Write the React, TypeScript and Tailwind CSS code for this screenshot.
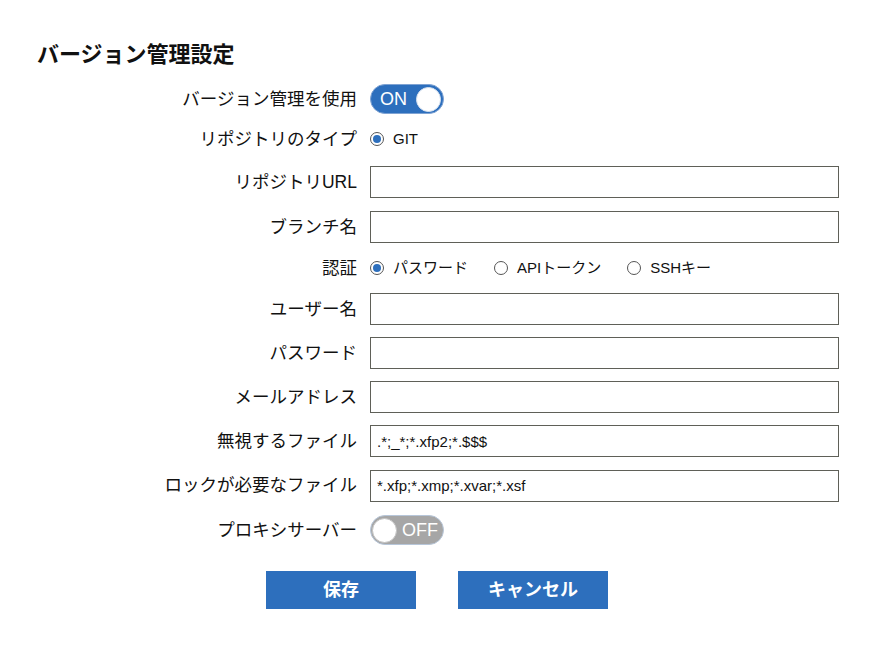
import { useState } from "react"

type ToggleProps = {
    on: boolean;
    onChange: (v: boolean) => void;
}

const Toggle = ({ on, onChange }: ToggleProps) => {
    return (
        <button
            type="button"
            onClick={() => onChange(!on)}
            className={
                on
                    ? "flex items-center justify-between w-[74px] h-[30px] rounded-full bg-[#2d6fbd] border border-[#7fa3d3] pl-[9px] pr-[2px]"
                    : "flex items-center justify-between w-[74px] h-[30px] rounded-full bg-[#a6a6a6] border border-[#b7c6d9] pl-[1px] pr-[5px]"
            }
        >
            {on ? (
                <>
                    <span className="text-white text-[18px] leading-none">ON</span>
                    <span className="w-[25px] h-[25px] rounded-full bg-white border border-[#d6e1ef]" />
                </>
            ) : (
                <>
                    <span className="w-[25px] h-[25px] rounded-full bg-white border border-[#c2c2c2]" />
                    <span className="text-white text-[18px] leading-none">OFF</span>
                </>
            )}
        </button>
    )
}

type RadioProps = {
    label: string;
    checked: boolean;
    onSelect: () => void;
}

const Radio = ({ label, checked, onSelect }: RadioProps) => {
    return (
        <label className="flex items-center gap-[9px] cursor-pointer" onClick={onSelect}>
            <span className="flex items-center justify-center w-[14px] h-[14px] rounded-full border-[1.5px] border-[#555] bg-white">
                {checked && <span className="w-[8px] h-[8px] rounded-full bg-[#2d6fbd]" />}
            </span>
            <span className="text-[15px] text-[#111]">{label}</span>
        </label>
    )
}

type RowProps = {
    label: string;
    height: string;
    children: React.ReactNode;
}

const Row = ({ label, height, children }: RowProps) => {
    return (
        <div className={"flex items-center " + height}>
            <div className="w-[357px] text-right text-[17.5px] text-[#111]">{label}</div>
            <div className="ml-[13px] flex items-center">{children}</div>
        </div>
    )
}

const Field = ({ value }: { value?: string }) => {
    return (
        <input
            type="text"
            defaultValue={value}
            className="w-[469px] h-[32px] border border-[#5f6058] px-[6px] text-[15px] text-[#111] outline-none"
        />
    )
}

export default function App() {
    const [useVcs, setUseVcs] = useState(true)
    const [proxy, setProxy] = useState(false)
    const [auth, setAuth] = useState("password")

    return (
        <div className="w-[875px] h-[645px] bg-white" style={{ fontFamily: '"Liberation Sans", "Noto Sans CJK JP", sans-serif' }}>
            <div className="pt-[42px] pl-[37px]">
                <h1 className="text-[22px] font-bold text-[#111] leading-[26px]">バージョン管理設定</h1>
            </div>
            <div className="mt-[11px] flex flex-col">
                <Row label="バージョン管理を使用" height="h-[40px]">
                    <Toggle on={useVcs} onChange={setUseVcs} />
                </Row>
                <Row label="リポジトリのタイプ" height="h-[40px]">
                    <Radio label="GIT" checked onSelect={() => {}} />
                </Row>
                <Row label="リポジトリURL" height="h-[46px]">
                    <Field />
                </Row>
                <Row label="ブランチ名" height="h-[44px]">
                    <Field />
                </Row>
                <Row label="認証" height="h-[38px]">
                    <div className="flex items-center gap-[26px]">
                        <Radio label="パスワード" checked={auth === "password"} onSelect={() => setAuth("password")} />
                        <Radio label="APIトークン" checked={auth === "token"} onSelect={() => setAuth("token")} />
                        <Radio label="SSHキー" checked={auth === "ssh"} onSelect={() => setAuth("ssh")} />
                    </div>
                </Row>
                <Row label="ユーザー名" height="h-[44px]">
                    <Field />
                </Row>
                <Row label="パスワード" height="h-[44px]">
                    <Field />
                </Row>
                <Row label="メールアドレス" height="h-[44px]">
                    <Field />
                </Row>
                <Row label="無視するファイル" height="h-[44px]">
                    <Field value=".*;_*;*.xfp2;*.$$$" />
                </Row>
                <Row label="ロックが必要なファイル" height="h-[45px]">
                    <Field value="*.xfp;*.xmp;*.xvar;*.xsf" />
                </Row>
                <Row label="プロキシサーバー" height="h-[44px]">
                    <Toggle on={proxy} onChange={setProxy} />
                </Row>
            </div>
            <div className="mt-[19px] flex gap-[42px] pl-[266px]">
                <button type="button" className="w-[150px] h-[38px] bg-[#2d6fbd] text-white font-bold text-[18px]">保存</button>
                <button type="button" className="w-[150px] h-[38px] bg-[#2d6fbd] text-white font-bold text-[18px]">キャンセル</button>
            </div>
        </div>
    )
}
